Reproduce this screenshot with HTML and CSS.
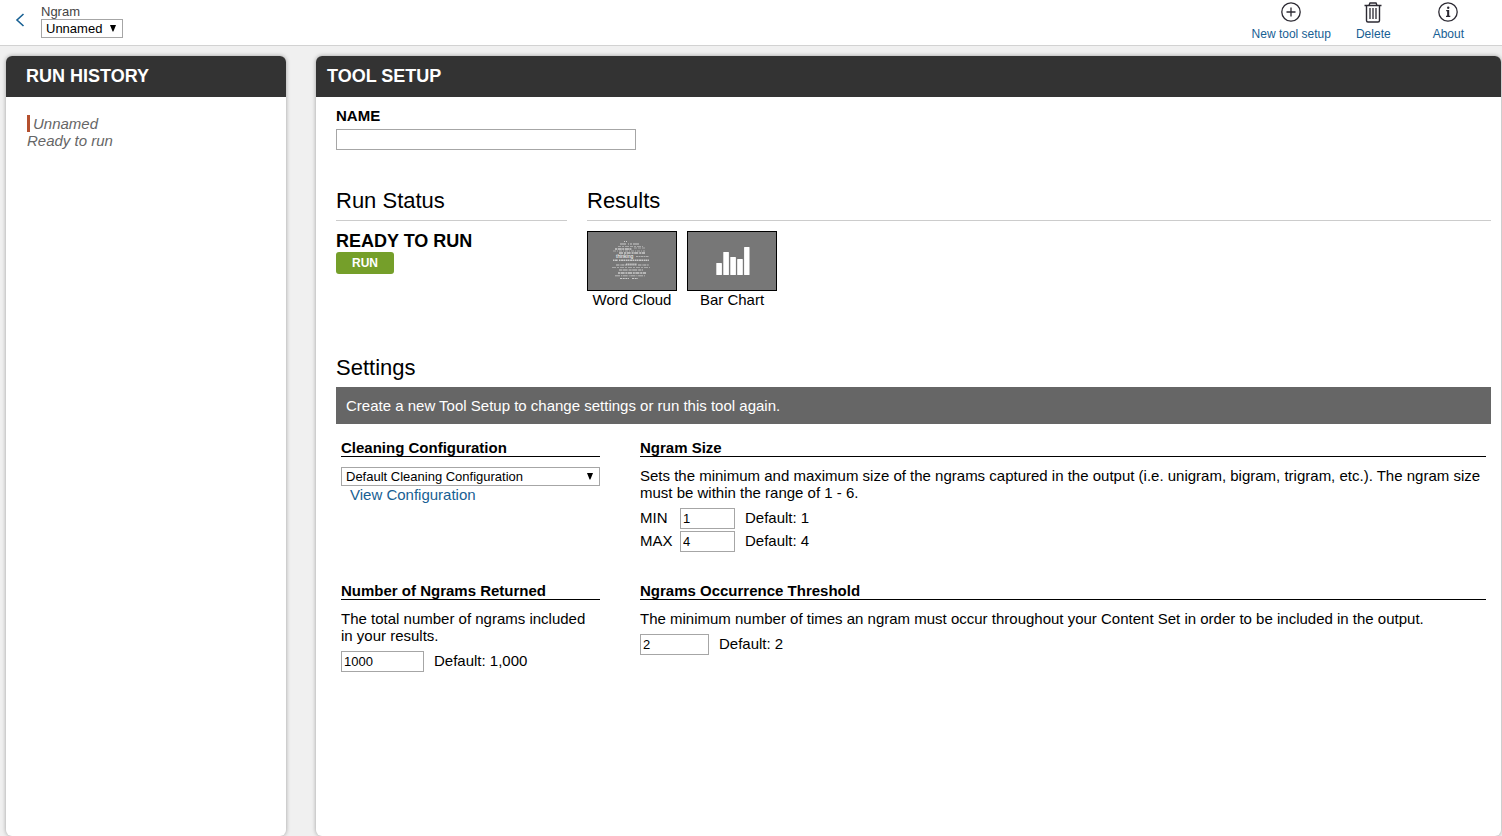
FILE: index.html
```html
<!DOCTYPE html>
<html lang="en">
<head>
<meta charset="utf-8">
<title>Ngram - Tool Setup</title>
<link rel="stylesheet" href="styles.css">
</head>
<body>
<header class="topbar">
  <a class="back" href="#" aria-label="Back">
    <svg width="10" height="14" viewBox="0 0 10 14" fill="none" stroke="currentColor" stroke-width="1.6"><path d="M8.500 1 2 7l6.500 6"/></svg>
  </a>
  <div class="tool">
    <label class="tool-label" for="setup">Ngram</label>
    <div class="select">
      <select id="setup"><option>Unnamed</option></select>
      <svg class="arrow" width="6" height="7" viewBox="0 0 6 7"><path d="M0 0h6L3.400 6.500h-.8z"/></svg>
    </div>
  </div>
  <nav class="actions">
    <a class="action" href="#">
      <svg width="20" height="20" viewBox="0 0 20 20" fill="none" stroke="currentColor" stroke-width="1.300"><circle cx="10" cy="10" r="9.200"/><path d="M10 5.500v9M5.500 10h9"/></svg>
      <span>New tool setup</span>
    </a>
    <a class="action" href="#">
      <svg width="18" height="21" viewBox="0 0 18 21" fill="none" stroke="currentColor" stroke-width="1.400"><path d="M.5 3.500h17M5 3.300 6 1h6l1 2.300M2.500 4v14.500q0 1.500 1.500 1.500h10q1.500 0 1.500-1.500V4"/><path d="M6 6v11M9 6v11M12 6v11" stroke-width="1.300"/></svg>
      <span>Delete</span>
    </a>
    <a class="action" href="#">
      <svg width="20" height="20" viewBox="0 0 20 20" fill="none" stroke="currentColor" stroke-width="1.300"><circle cx="10" cy="10" r="9.200"/><path d="M8.200 8.600h2.100v5.400M8 14.300h4.300" stroke-width="1.300"/><path d="M10.200 8v6" stroke-width="2"/><circle cx="10.200" cy="5.700" r="1.200" fill="currentColor" stroke="none"/></svg>
      <span>About</span>
    </a>
  </nav>
</header>
<main class="layout">
  <aside class="panel history">
    <h2 class="panel-title">RUN HISTORY</h2>
    <div class="history-item">
      <div class="history-name">Unnamed</div>
      <div>Ready to run</div>
    </div>
  </aside>
  <section class="panel setup">
    <h2 class="panel-title">TOOL SETUP</h2>
    <div class="content">
      <div class="name">
        <label for="name">NAME</label>
        <input id="name" class="box name-box" type="text">
      </div>
      <div class="overview">
        <section>
          <h3 class="heading ruled">Run Status</h3>
          <p class="status">READY TO RUN</p>
          <button class="run" type="button">RUN</button>
        </section>
        <section>
          <h3 class="heading ruled">Results</h3>
          <div class="results">
            <a class="result" href="#">
              <svg class="thumb" viewBox="0 0 88 58" fill="none" stroke="#ccc" stroke-width="1" aria-hidden="true">
                <path d="M36 9.500h3" stroke-dasharray="1 1"/>
                <path d="M32 12h20" stroke-dasharray="6 2 1 1 2 1"/>
                <path d="M30 14.500h25" stroke-dasharray="3 1 2 1 4 1" opacity=".6"/>
                <path d="M27 17h17" stroke-dasharray="2 .7 4 .5" stroke-width="1.600"/>
                <path d="M46 16h11" stroke-dasharray="3 1" opacity=".6"/>
                <path d="M25 19h32" stroke-dasharray="3 1 1 1" opacity=".6"/>
                <path d="M31 21h26" stroke-dasharray="4 1 2 .6" stroke-width="1.500"/>
                <path d="M48 24.500h13" stroke-dasharray="2 .5" opacity=".7"/>
                <text class="cloud-word" x="28" y="26">thinking</text>
                <path d="M25 28.300h5M31 28.300h30" stroke-dasharray="1.500 .6 2 .4" stroke-width="1.500"/>
                <path d="M28 33h10M50 33h11" stroke-dasharray="3 .6 1 .6"/>
                <path d="M38 32.500h11" stroke-dasharray="1.500 .6" stroke-width="2"/>
                <path d="M24 35.500h38" stroke-dasharray="4 1 2 1" opacity=".6"/>
                <path d="M31 38h24" stroke-dasharray="3 .6 5 1"/>
                <path d="M30 41h28" stroke-dasharray="2 .6 4 .8" stroke-width="1.300"/>
                <path d="M27 43.800h30" stroke-dasharray="5 1 1 .7" opacity=".8"/>
                <path d="M32 46.500h9M44 46.500h6" stroke-dasharray="2 .7"/>
              </svg>
              <span>Word Cloud</span>
            </a>
            <a class="result" href="#">
              <svg class="thumb" viewBox="0 0 88 58" fill="#fff" aria-hidden="true">
                <rect x="28.300" y="31" width="5.600" height="12" rx=".6"/><rect x="35.300" y="20" width="5.600" height="23" rx=".6"/><rect x="42.300" y="25" width="5.600" height="18" rx=".6"/><rect x="49.200" y="27" width="5.600" height="16" rx=".6"/><rect x="56.100" y="15" width="5.400" height="28" rx=".6"/>
              </svg>
              <span>Bar Chart</span>
            </a>
          </div>
        </section>
      </div>
      <section>
        <h3 class="heading">Settings</h3>
        <p class="notice">Create a new Tool Setup to change settings or run this tool again.</p>
        <div class="settings">
          <section class="setting">
            <h4><label for="cleaning">Cleaning Configuration</label></h4>
            <div class="select select-wide">
              <select id="cleaning"><option>Default Cleaning Configuration</option></select>
              <svg class="arrow" width="6" height="7" viewBox="0 0 6 7"><path d="M0 0h6L3.400 6.500h-.8z"/></svg>
            </div>
            <a class="view" href="#">View Configuration</a>
          </section>
          <section class="setting">
            <h4>Ngram Size</h4>
            <p>Sets the minimum and maximum size of the ngrams captured in the output (i.e. unigram, bigram, trigram, etc.). The ngram size must be within the range of 1 - 6.</p>
            <div class="field"><label class="limit" for="min">MIN</label><input id="min" class="box size-box" type="text" value="1"><span>Default: 1</span></div>
            <div class="field"><label class="limit" for="max">MAX</label><input id="max" class="box size-box" type="text" value="4"><span>Default: 4</span></div>
          </section>
          <section class="setting">
            <h4><label for="count">Number of Ngrams Returned</label></h4>
            <p>The total number of ngrams included in your results.</p>
            <div class="field"><input id="count" class="box count-box" type="text" value="1000"><span>Default: 1,000</span></div>
          </section>
          <section class="setting">
            <h4><label for="threshold">Ngrams Occurrence Threshold</label></h4>
            <p>The minimum number of times an ngram must occur throughout your Content Set in order to be included in the output.</p>
            <div class="field"><input id="threshold" class="box threshold-box" type="text" value="2"><span>Default: 2</span></div>
          </section>
        </div>
      </section>
    </div>
  </section>
</main>
</body>
</html>
```
FILE: styles.css
```css
* { box-sizing: border-box; }
body {
  display: flex;
  flex-direction: column;
  min-height: 100vh;
  margin: 0;
  background: #f0f0f0;
  color: #000;
  font: 15px/17px "Liberation Sans", Arial, sans-serif;
}
h2, h3, h4, p { margin: 0; }
a { color: #176093; text-decoration: none; }
input, select, button { font-family: inherit; }

.topbar {
  display: flex;
  align-items: flex-start;
  padding: 0 38px 0 15px;
  height: 46px;
  background: #fff;
  border-bottom: 1px solid #d2d2d2;
}
.back { display: flex; padding: 13px 16px 0 0; }
.tool { padding-top: 4px; }
.tool-label { display: block; font-size: 13px; line-height: 15px; color: #444; }
.actions { display: flex; gap: 25px; margin-left: auto; padding-top: 2px; }
.action {
  display: flex;
  flex-direction: column;
  align-items: center;
  justify-content: space-between;
  height: 39px;
  font-size: 12px;
  line-height: 14px;
}
.action:last-child { margin-left: 17px; }
.action svg { color: #2c2a33; }

.select { display: inline-grid; align-items: center; }
.select select {
  grid-area: 1 / 1;
  appearance: none;
  width: 100%;
  height: 19px;
  padding: 0 19px 0 4px;
  border: 1px solid #a6a6a6;
  border-radius: 0;
  background: #fff;
  color: #000;
  font-size: 13px;
}
.select .arrow { grid-area: 1 / 1; justify-self: end; margin-right: 7px; pointer-events: none; }
.select-wide { display: grid; }

.layout {
  flex: 1;
  display: grid;
  grid-template-columns: 280px 1fr;
  gap: 30px;
  padding: 10px 1px 0 6px;
}
.panel {
  background: #fff;
  border-radius: 6px;
  box-shadow: 0 0 4px rgba(0, 0, 0, .35);
  overflow: hidden;
}
.panel-title {
  padding: 10px 11px;
  background: #333;
  color: #fff;
  font-size: 18px;
  line-height: 21px;
}
.history .panel-title { padding-left: 20px; }
.history-item { padding: 18px 21px; color: #666; font-style: italic; }
.history-name { padding-left: 3px; border-left: 3px solid #b5502f; }

.content { padding: 10px 10px 20px 20px; }
.name label { display: block; margin-bottom: 5px; font-weight: bold; }
.box {
  display: block;
  height: 21px;
  padding: 0 2px;
  border: 1px solid #a6a6a6;
  background: #fff;
  color: #000;
  font-size: 13px;
}
.name-box { width: 300px; }
.overview {
  display: grid;
  grid-template-columns: 20% 1fr;
  gap: 20px;
  padding: 37px 0 46px;
}
.heading { font-size: 22px; line-height: 28px; font-weight: normal; }
.ruled { padding-bottom: 5px; border-bottom: 1px solid #ccc; }
.status { padding-top: 10px; font-size: 18px; line-height: 21px; font-weight: bold; }
.run {
  display: block;
  width: 58px;
  height: 22px;
  padding: 0;
  border: 0;
  border-radius: 3px;
  background: #759f2a;
  color: #fff;
  font-size: 12px;
  font-weight: bold;
}
.results { display: flex; gap: 10px; padding-top: 10px; }
.result { width: 90px; color: #000; text-align: center; }
.result span { display: block; }
.thumb { display: block; width: 90px; height: 60px; border: 1px solid #000; background: #777; }
.cloud-word { fill: #fff; stroke: none; font-size: 5px; }

.notice { margin-top: 5px; padding: 10px; background: #666; color: #fff; }
.settings {
  display: grid;
  grid-template-columns: 259px 1fr;
  gap: 30px 40px;
  padding: 15px 5px 0;
}
.setting h4 { margin-bottom: 10px; border-bottom: 1px solid #000; font-size: 15px; line-height: 17px; }
.setting p { padding-bottom: 7px; }
.view { display: block; padding-left: 9px; }
.field { display: flex; align-items: flex-start; line-height: 19px; }
.field + .field { margin-top: 2px; }
.field span { margin-left: 10px; }
.limit { width: 40px; }
.size-box { width: 55px; }
.count-box { width: 83px; }
.threshold-box { width: 69px; }
```
